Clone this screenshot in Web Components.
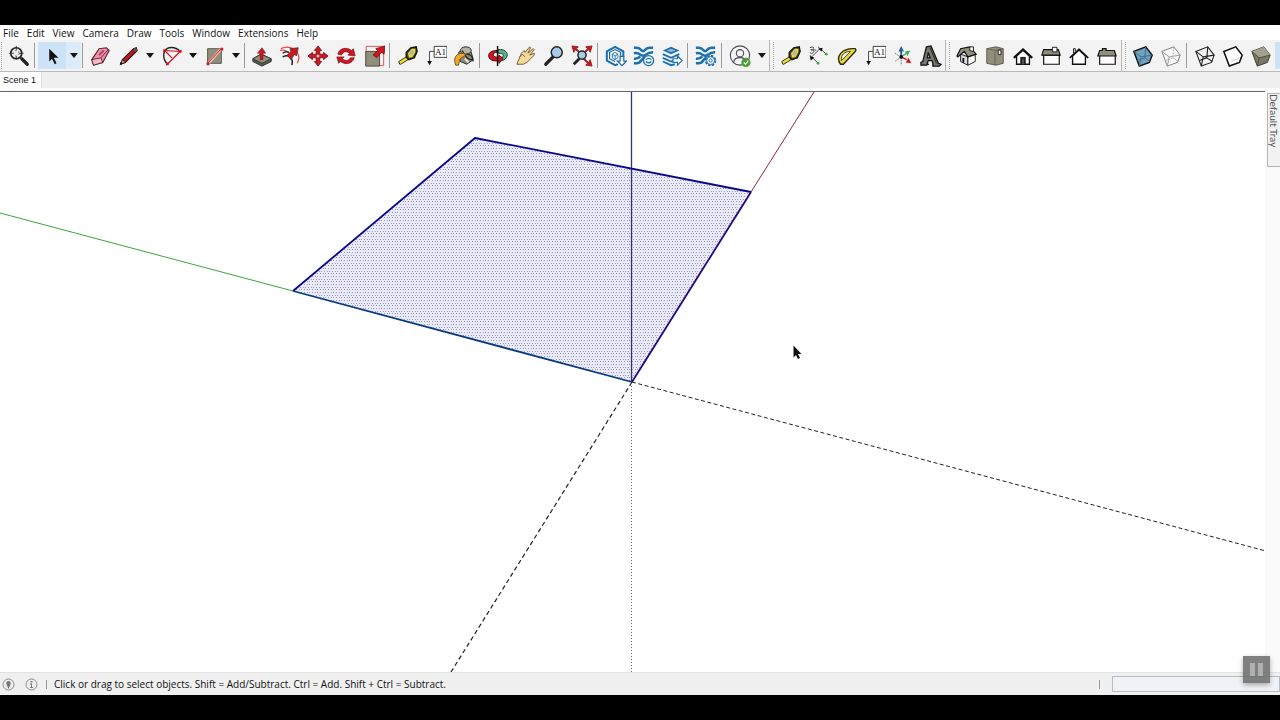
<!DOCTYPE html>
<html lang="en">
<head>
<meta charset="utf-8">
<title>Modeling window</title>
<style>
html, body { height: 100%; margin: 0; background: #000; }
body { font-family: "Open Sans", "Noto Sans", sans-serif; font-size: 10px; color: #1a1a1a; }
</style>
</head>
<body>
<model-app>
  <menu-bar slot="menu" items="File,Edit,View,Camera,Draw,Tools,Window,Extensions,Help"></menu-bar>
  <tool-bar slot="tools">
    <tool-grip></tool-grip>
    <tool-button icon="zoomwin" label="Zoom Window"></tool-button>
    <tool-sep tight></tool-sep>
    <tool-button icon="select" label="Select" menu active></tool-button>
    <tool-sep tight></tool-sep>
    <tool-button icon="eraser" label="Eraser"></tool-button>
    <tool-button icon="pencil" label="Line" menu></tool-button>
    <tool-button icon="arc" label="Arc" menu></tool-button>
    <tool-button icon="rect" label="Rectangle" menu></tool-button>
    <tool-sep tight></tool-sep>
    <tool-button icon="push" label="Push/Pull"></tool-button>
    <tool-button icon="offset" label="Offset"></tool-button>
    <tool-button icon="move" label="Move"></tool-button>
    <tool-button icon="rotate" label="Rotate"></tool-button>
    <tool-button icon="scale" label="Scale"></tool-button>
    <tool-sep></tool-sep>
    <tool-button icon="tape" label="Tape Measure"></tool-button>
    <tool-button icon="text" label="Text"></tool-button>
    <tool-button icon="paint" label="Paint Bucket"></tool-button>
    <tool-sep></tool-sep>
    <tool-button icon="orbit" label="Orbit"></tool-button>
    <tool-button icon="pan" label="Pan"></tool-button>
    <tool-button icon="zoom" label="Zoom"></tool-button>
    <tool-button icon="extents" label="Zoom Extents"></tool-button>
    <tool-sep></tool-sep>
    <tool-button icon="warehouse" label="3D Warehouse"></tool-button>
    <tool-button icon="share" label="Share Model"></tool-button>
    <tool-button icon="layers" label="Send to Layout"></tool-button>
    <tool-sep></tool-sep>
    <tool-button icon="extman" label="Extension Manager"></tool-button>
    <tool-sep></tool-sep>
    <tool-button icon="user" label="Account" menu></tool-button>
    <tool-grip edge></tool-grip>
    <tool-button icon="tape" label="Tape Measure"></tool-button>
    <tool-button icon="dim" label="Dimensions"></tool-button>
    <tool-button icon="protractor" label="Protractor"></tool-button>
    <tool-button icon="text" label="Text Label"></tool-button>
    <tool-button icon="axes" label="Axes"></tool-button>
    <tool-button icon="text3d" label="3D Text"></tool-button>
    <tool-grip edge></tool-grip>
    <tool-button icon="iso" label="Iso"></tool-button>
    <tool-button icon="top" label="Top"></tool-button>
    <tool-button icon="front" label="Front"></tool-button>
    <tool-button icon="right" label="Right"></tool-button>
    <tool-button icon="back" label="Back"></tool-button>
    <tool-button icon="left" label="Left"></tool-button>
    <tool-grip edge></tool-grip>
    <tool-button icon="xray" label="X-Ray"></tool-button>
    <tool-button icon="backedges" label="Back Edges"></tool-button>
    <tool-sep></tool-sep>
    <tool-button icon="wire" label="Wireframe"></tool-button>
    <tool-button icon="hidden" label="Hidden Line"></tool-button>
    <tool-button icon="shaded" label="Shaded"></tool-button>
    <tool-button icon="blank" label="Shaded With Textures" active></tool-button>
  </tool-bar>
  <scene-tabs slot="scenes">Scene 1</scene-tabs>
  <model-viewport slot="view"></model-viewport>
  <side-tray slot="tray">Default Tray</side-tray>
  <status-bar slot="status">Click or drag to select objects. Shift = Add/Subtract. Ctrl = Add. Shift + Ctrl = Subtract.</status-bar>
  <pause-button slot="overlay"></pause-button>
</model-app>

<script>
const define = (name, html, setup) => {
  const template = document.createElement('template');
  template.innerHTML = html;
  customElements.define(name, class extends HTMLElement {
    constructor() {
      super();
      this.attachShadow({ mode: 'open' }).append(template.content.cloneNode(true));
    }
    connectedCallback() { if (setup) setup(this, this.shadowRoot); }
  });
};

/* Shared drawing parts */
const RED = '#d3141f', STONE = '#918f7c', BLUE = '#1c6fae';
const ribbons = `<g fill="none" stroke="${BLUE}" stroke-width="2.800">
  <path d="M1 3h3q3 0 5 2.500t4 0t5-2.500h4M1 9q4-1 7 1.500t6 0t8-2.500M1 20h3q3 0 5-3t4-3M1 15q4 .5 7-2.500"/></g>`;
const tape = `<path d="M3 21l-1-3 8-5 2 3-8 5z" fill="#f4df21" stroke="#222"/><path d="M10 8l5-5 6-1 1 5-3 7-6 2-3-3z" fill="#4a4824" stroke="#111" stroke-width="1.400"/><path d="M12 9l4-5 4 0 0 4-3 5-4 1z" fill="#e5d936"/><ellipse cx="16" cy="8.500" rx="2.200" ry="3" fill="#b9b9a0" transform="rotate(30 16 8.500)"/>`;
const label = `<path d="M10 1.500h14v12H10zM10 7H5v12" fill="#fff" stroke="#333"/><path d="M2.500 17.500h5L5 22z" fill="#111"/><text x="17" y="11" text-anchor="middle" font-family="Liberation Serif, serif" font-size="10" fill="#111">A1</text>`;
const lens = (x, y, r) => `<circle cx="${x}" cy="${y}" r="${r}" fill="#a9cbe8" stroke="#222" stroke-width="1.600"/>`;

const ICONS = {
  blank: '',
  zoomwin: `<path d="M15 15l6 6" stroke="#222" stroke-width="3.500" stroke-linecap="round"/><circle cx="9" cy="9" r="6" fill="#eee" stroke="#222" stroke-width="1.800"/><path d="M9 1v5M9 12v4M1 9h5M12 9h5" stroke="#333"/><circle cx="9" cy="9" r="3" fill="none" stroke="#777" stroke-dasharray="2 2"/>`,
  select: `<path d="M9 4v14l3-3 3 6 2-1-3-6h5z" fill="#111"/>`,
  eraser: `<path d="M3 16L11 4l8-1 3 3-7 13-10 3z" fill="#ef8fa8" stroke="#5d2333" stroke-width="1.200"/><path d="M3 16l10-2 2 5-10 3z" fill="#fab9c9" stroke="#5d2333"/><path d="M13 14l8-9" stroke="#5d2333"/><path d="M11 11l5-5" stroke="#a8415c" stroke-width="2"/>`,
  pencil: `<path d="M4 21l2-5L18 4l3-1 1 3L9 19z" fill="#b01f24" stroke="#3a1010" stroke-width="1.300"/><path d="M4 21l2-5 3 3z" fill="#dcb884" stroke="#222"/><path d="M18 4l3-1 1 3-2 2z" fill="#555"/><path d="M4 21l1-2" stroke="#111" stroke-width="2"/>`,
  arc: `<path d="M8 21C2 14 3 5 10 3c5-1 9 1 12 4" fill="none" stroke="#222" stroke-width="1.500"/><path d="M5 6L22 7 8 21M5 6l8 8" fill="none" stroke="${RED}" stroke-width="1.300"/><path d="M3.500 4.500h3v3h-3zM20.500 5.500h3v3h-3zM6.500 19h3v3h-3z" fill="${RED}"/>`,
  rect: `<path d="M5 4h15v16H5z" fill="${STONE}" stroke="#555347"/><path d="M6 20L20 4" stroke="#f6b7b7" stroke-width="3"/><path d="M5 20L20 4" stroke="${RED}"/><path d="M4 19h3v3H4zM19 3h3v3h-3z" fill="${RED}"/>`,
  push: `<path d="M2 15l9-5 11 5v3l-10 5-10-5z" fill="#5c5b50" stroke="#222"/><path d="M2 15l9-5 11 5-10 5z" fill="${STONE}" stroke="#333"/><path d="M10 16V9H7l5-6 4 6h-3v7z" fill="${RED}" stroke="#721016" stroke-width=".6"/>`,
  offset: `<path d="M2 4C13-1 26 8 20 20M1 6c4-1 6 0 8 1" fill="none" stroke="#ee4049" stroke-width="1.300"/><path d="M4 13c7-4 12 2 10 9M4 9c3-2 5-2 7-1" fill="none" stroke="#222" stroke-width="1.600"/><path d="M9 11l4-4-1-3 9-1-2 9-2-2-4 6z" fill="${RED}" stroke="#333" stroke-width=".8"/>`,
  move: `<path d="M12 1l4 5h-2v4h4V8l5 4-5 4v-2h-4v4h2l-4 5-4-5h2v-4H6v2l-5-4 5-4v2h4V6H8z" fill="${RED}" stroke="#571014" stroke-width=".8"/><circle cx="12" cy="12" r="1.500" fill="#f5dede"/>`,
  rotate: `<path d="M3 10c2-7 10-8 15-4l2-2 2 8-8-1 2-2c-4-3-7-2-9 2zM21 14c-2 7-10 8-15 4l-2 2-2-7 8 0-2 2c4 3 7 2 9-1z" fill="${RED}" stroke="#6b1015" stroke-width=".7"/>`,
  scale: `<path d="M3.500 1.500h19v21h-19z" fill="none" stroke="#e34b50"/><path d="M3 7h15v16H3z" fill="${STONE}" stroke="#47463d"/><path d="M11 11l5-5-2-2 10-3-1 9-3-2-5 6z" fill="${RED}" stroke="#5a0e12" stroke-width=".8"/>`,
  tape,
  text: label,
  paint: `<path d="M6 8l8-5 6 5 2 8-7 5-7-3z" fill="#8b8c7b" stroke="#222"/><ellipse cx="14" cy="6" rx="6" ry="4" fill="#b3b4a3" stroke="#222"/><path d="M15 10c5 0 7 4 7 8M10 6c4 6 5 10 11 10" fill="none" stroke="#222" stroke-width="1.400"/><path d="M3 22C0 14 3 9 11 9c3 0 3 3 0 4-4 1-4 5-5 9z" fill="#f2a72c" stroke="#69501d"/><path d="M13 15l4 4" stroke="#e8e8dc" stroke-width="2"/>`,
  orbit: `<path d="M11 6C4 6 1 9 2 13c1 4 7 5 11 4v3l5-5-5-4v2c-4 1-7-1-6-3s2-2 4-2z" fill="${RED}" stroke="#38090c"/><path d="M12 5c7-1 11 3 10 7-1 3-3 4-5 5v-4c2-2 1-4-5-4z" fill="#59b08a" stroke="#173c2b"/><path d="M11.500 1v22" stroke="#111" stroke-width="1.600"/>`,
  pan: `<path d="M2 21L7 9l3-3 1 2 5-6 1 1-3 6 6-5 1 1-5 6 5-2v2l-8 8-4 2z" fill="#f3d99e" stroke="#70552b"/><path d="M5 13l3-3 3 3" fill="none" stroke="#70552b"/>`,
  zoom: `<path d="M3 21l8-8" stroke="#222" stroke-width="3.500" stroke-linecap="round"/>${lens(15, 8, 6)}`,
  extents: `<path d="M1 1l7 1-2 2 5 5-1 1-5-5-2 3zM23 1l-7 1 2 2-5 5 1 1 5-5 2 3zM23 23l-7-1 2-2-5-5 1-1 5 5 2-3z" fill="${RED}" stroke="#791016" stroke-width=".8"/><path d="M3 21l6-6" stroke="#222" stroke-width="3"/>${lens(12, 11, 4.5)}`,
  warehouse: `<path d="M14 21l-3 1-9-5V7l9-5 9 5v6" fill="none" stroke="${BLUE}" stroke-width="2.200"/><path d="M11 18l-6-3V8l6-3 6 3v6" fill="none" stroke="${BLUE}" stroke-width="1.300"/><path d="M11 8l3 2v4l-3 2-3-2v-4zM8 10l3 2 3-2M11 12v4" fill="#fff" stroke="${BLUE}"/><path d="M16.500 12.500h4v5h3l-5 5-5-5h3z" fill="#fff" stroke="${BLUE}" stroke-width="1.300"/>`,
  share: `${ribbons}<circle cx="17" cy="17" r="5.500" fill="#f3f8fb" stroke="${BLUE}" stroke-width="1.400"/><path d="M14 16q3-3 6 0M14 18q3 3 6 0" fill="none" stroke="${BLUE}" stroke-width="1.300"/>`,
  layers: `<path d="M2 6l9-4 9 4-9 4z" fill="${BLUE}"/><path d="M6 6l5-2 5 2-5 2z" fill="#8fb9d6"/><path d="M2 10l9 4 9-4M2 14l9 4 4-1M2 18l9 4 4-1" fill="none" stroke="${BLUE}" stroke-width="2"/><path d="M13 15h5v-3l5 5-5 5v-3h-5z" fill="#fff" stroke="${BLUE}" stroke-width="1.300"/>`,
  extman: `${ribbons}<circle cx="17" cy="17" r="5" fill="#f3f8fb" stroke="${BLUE}" stroke-width="2.500" stroke-dasharray="2.500 1.400"/><circle cx="17" cy="17" r="4.300" fill="#f3f8fb" stroke="${BLUE}"/><circle cx="17" cy="17" r="1.800" fill="none" stroke="${BLUE}"/>`,
  user: `<circle cx="12" cy="11.500" r="10.500" fill="#f5f5f7" stroke="#4b4b55" stroke-width="1.200"/><circle cx="12" cy="9" r="4" fill="none" stroke="#4b4b55" stroke-width="1.200"/><path d="M5 19c1-7 13-7 14 0" fill="none" stroke="#4b4b55" stroke-width="1.200"/><circle cx="18.500" cy="19" r="5" fill="#4a9c35"/><path d="M16 19l2 2 3-4" fill="none" stroke="#fff" stroke-width="1.300"/>`,
  dim: `<path d="M4 13L13 4M2 11l9 9M11 2l9 8" fill="none" stroke="#444"/><path d="M2 12l5 2-4 3zM11 4l5-1-1 4z" fill="#111"/><path d="M2 3q5-2 4 1t-3 1q5 0 3 3T2 8M7 5l2 1" fill="none" stroke="#333"/><circle cx="11" cy="20" r="1.500" fill="#42a742"/><circle cx="20" cy="10" r="1.500" fill="#42a742"/>`,
  protractor: `<path d="M5 21C-1 13 6 3 21 4c1 1 1 2 0 3L8 21z" fill="#e8dd36" stroke="#29270f" stroke-width="1.500"/><path d="M6 17C5 11 9 7 16 7z" fill="#f3f3ee" stroke="#333"/>`,
  axes: `<path d="M10 13v9M10 13L3 9M10 13l-7 5" stroke="#777" stroke-dasharray="2 1"/><path d="M10 14V5" stroke="#225e9c" stroke-width="2"/><path d="M10 1l3 6H7z" fill="#225e9c"/><path d="M10 13l6-4" stroke="#44ac54" stroke-width="1.500"/><path d="M20 6l-3 6-3-5z" fill="#44ac54"/><path d="M10 13l6 3" stroke="${RED}" stroke-width="1.500"/><path d="M21 20l-6-1 3-5z" fill="${RED}"/><circle cx="10" cy="13" r="2" fill="#111"/>`,
  text3d: `<path fill-rule="evenodd" d="M7 2l5-1 8 19 3 1-2 2h-7v-3l-1-3H9l-1 3 1 1-2 1H1v-3l2-1zM9 8l-1 6h3z" fill="#77776c" stroke="#111" stroke-width="1.400"/><path d="M11 3l7 17" fill="none" stroke="#222"/>`,
  iso: `<path d="M5 10l8 3v9l-8-4z" fill="#ddd" stroke="#111"/><path d="M13 13l8-3v8l-8 4z" fill="#fff" stroke="#111"/><path d="M1 12l4-8 10-2 7 8-9 3-4-6-7 6z" fill="${STONE}" stroke="#111" stroke-width="1.300"/><path d="M15 2h4v5l-4-1z" fill="#fff" stroke="#111"/><path d="M8 14v5" stroke="#111" stroke-width="2"/>`,
  top: `<path d="M3 4l10-2 8 2v16l-8 2-10-2z" fill="${STONE}" stroke="#595748"/><path d="M12 6v16M3 4l9 2 9-2" fill="none" stroke="#66644f"/><path d="M15.500 5.500h3v5h-3z" fill="#eee" stroke="#222"/>`,
  front: `<path d="M5 12v9h14v-9l-7-7z" fill="#fff" stroke="#111" stroke-width="1.500"/><path d="M2 14L12 5l10 9" fill="none" stroke="#111" stroke-width="2.400"/><path d="M9 13h6v8H9z" fill="#222"/><path d="M12 15v6" stroke="#888"/>`,
  right: `<path d="M4 11h17v10H4z" fill="#fff" stroke="#111" stroke-width="1.300"/><path d="M4 5h16l2 6H2z" fill="${STONE}" stroke="#111" stroke-width="1.300"/><path d="M13.500 2.500h5v5h-5z" fill="#fff" stroke="#111"/>`,
  back: `<path d="M5 12v9h14v-9l-7-7z" fill="#fff" stroke="#111" stroke-width="1.500"/><path d="M2 14L12 5l10 9" fill="none" stroke="#111" stroke-width="2"/><path d="M6 9V4h2v3" fill="none" stroke="#111"/>`,
  left: `<path d="M4 11h17v10H4z" fill="#fff" stroke="#111" stroke-width="1.300"/><path d="M4 6h3V4h4v2h9l2 6H2z" fill="${STONE}" stroke="#111" stroke-width="1.300"/>`,
  xray: `<path d="M2 7l13-5 7 9-3 8-11 4z" fill="#6fa0bd" stroke="#111" stroke-width="1.600"/><path d="M2 7l8 6-2 10M10 13l12-2M15 2l-1 12-8 3M14 14l6 4" fill="none" stroke="#3d6d8a"/>`,
  backedges: `<path d="M2 7l13-5 7 9-3 8-11 4z" fill="#f7f7f7" stroke="#777"/><path d="M2 7l8 6-2 10M10 13l12-2" fill="none" stroke="#999"/><path d="M15 2l-1 12-8 3M14 14l6 4" fill="none" stroke="#aaa" stroke-dasharray="2 1"/>`,
  wire: `<g fill="none" stroke="#222" stroke-width="1.200"><path d="M2 7l13-5 7 9-3 8-11 4z"/><path d="M2 7l8 6-2 10M10 13l12-2M15 2l-1 12-8 3M14 14l6 4"/></g>`,
  hidden: `<path d="M2 7l13-5 7 9-3 8-11 4z" fill="#fff" stroke="#111" stroke-width="1.700"/><path d="M10 18l9-4" fill="none" stroke="#ccc"/>`,
  shaded: `<path d="M2 7l13-5 7 9-3 8-11 4z" fill="#7b7966" stroke="#333226"/><path d="M2 7l13-5 7 9-12 3z" fill="#a3a18d"/><path d="M2 7l8 7-2 9M10 14l12-3" fill="none" stroke="#4b4a3c"/>`
};

define('model-app', `
<style>
:host { display: flex; flex-direction: column; height: 100vh; box-sizing: border-box; padding: 25px 0; overflow: hidden; position: relative; background: #000; }
main { flex: 1; min-height: 0; display: grid; grid-template-columns: minmax(0, 1fr) 15px; background: #fafafa; }
</style>
<slot name="menu"></slot><slot name="tools"></slot><slot name="scenes"></slot>
<main><slot name="view"></slot><slot name="tray"></slot></main>
<slot name="status"></slot><slot name="overlay"></slot>`);

define('menu-bar', `
<style>
:host { display: block; background: #fff; }
nav { display: flex; gap: 8px; padding: 1px 3px 0; height: 14px; }
button { border: 0; padding: 0; background: none; font: inherit; line-height: 14px; color: #111; white-space: nowrap; }
</style><nav aria-label="Main menu"></nav>`, (host, root) => {
  const nav = root.querySelector('nav');
  nav.replaceChildren(...host.getAttribute('items').split(',').map(name => {
    const b = document.createElement('button');
    b.textContent = name;
    return b;
  }));
});

define('tool-bar', `
<style>
:host { display: block; background: #f3f3f3; border-bottom: 1px solid #b9b9b9; overflow: hidden; }
div { display: flex; height: 31px; align-items: stretch; }
</style><div role="toolbar" aria-label="Tools"><slot></slot></div>`);

define('tool-sep', `
<style>
:host { display: block; flex: none; width: 6px; }
:host([tight]) { width: 5px; }
i { display: block; width: 1px; height: 25px; margin: 3px 1px; background: #9a9a9a; }
</style><i></i>`);

define('tool-grip', `
<style>
:host { display: block; flex: none; width: 5px; }
i { display: block; height: 27px; margin: 2px 1px; border-left: 1px dotted #aaa; }
:host([edge]) { width: 8px; box-sizing: border-box; border-left: 1px solid #b5b5b5; }
:host([edge]) i { margin: 2px 3px; }
</style><i></i>`);

define('tool-button', `
<style>
:host { display: flex; flex: none; }
button { border: 0; padding: 0; margin: 2px 0; background: none; display: grid; place-items: center; }
.main { width: 28px; }
.more { width: 15px; }
:host([active]) button { background: #cce2f6; }
:host([active]) .more { background: #dcebf9; }
svg { display: block; }
</style>
<button class="main"><svg width="22" height="22" viewBox="0 0 24 24"></svg></button>
<button class="more"><svg width="8" height="5" viewBox="0 0 8 5"><path d="M0 0h8L4 5z" fill="#111"/></svg></button>`, (host, root) => {
  const name = host.getAttribute('label');
  root.querySelector('.main').setAttribute('aria-label', name);
  root.querySelector('.main svg').innerHTML = ICONS[host.getAttribute('icon')];
  const more = root.querySelector('.more');
  if (host.hasAttribute('menu')) more.setAttribute('aria-label', name + ' options');
  else more.remove();
});

define('scene-tabs', `
<style>
:host { display: flex; flex: none; height: 16px; background: #f0f0f0; border-bottom: 3px solid #fafafa; }
button { border: 0; border-right: 1px solid #ddd; padding: 0 5px 0 3px; background: #fff; font: 9px/15px "Liberation Sans", sans-serif; color: #111; }
</style><button role="tab" aria-selected="true"><slot></slot></button>`);

define('model-viewport', `
<style>
:host { display: block; min-height: 0; min-width: 0; background: #fff; border-top: 1px solid #666; overflow: hidden; }
svg { display: block; width: 100%; height: 100%; }
</style>
<svg viewBox="0 0 1265 580" preserveAspectRatio="xMidYMid slice" role="img" aria-label="Selected face on the model axes">
  <defs><pattern id="dots" width="8" height="8" patternUnits="userSpaceOnUse">
    <rect width="8" height="8" fill="#eaeaf6"/>
    <path d="M0 0h1v1H0zM3 0h1v1H3zM5 0h1v1H5zM1 3h1v1H1zM4 3h1v1H4zM7 3h1v1H7zM0 5h1v1H0zM3 5h1v1H3zM5 5h1v1H5z" fill="#9a9ad6"/>
  </pattern></defs>
  <path d="M475 46L751 100 632 290 293 199z" fill="url(#dots)"/>
  <path d="M0 121L293 199" stroke="#3fa53f" fill="none"/>
  <path d="M751 100L814 0" stroke="#8c2a2a" fill="none"/>
  <path d="M631.500 0V290" stroke="#333372" stroke-width="1.300"/>
  <path d="M293 199L475 46 751 100" fill="none" stroke="#08088a" stroke-width="1.800" stroke-linejoin="round"/>
  <path d="M751 100L632 290" stroke="#24067c" stroke-width="1.800"/>
  <path d="M293 199L632 290" stroke="#073a7c" stroke-width="1.800"/>
  <path d="M632 290L1264 458.500" stroke="#222" stroke-dasharray="4 2.500"/>
  <path d="M632 290L451 580" stroke="#222" stroke-width="1.200" stroke-dasharray="4.500 3"/>
  <path d="M631.500 291V580" stroke="#666" stroke-dasharray="1 2"/>
  <path d="M793.500 253.500v12l2.500-2.500 2 4 2-1-2-4h3.500z" fill="#111"/>
</svg>`);

define('side-tray', `
<style>
:host { display: block; padding: 2px 0 0 2px; background: #fafafa; }
button { display: block; box-sizing: border-box; width: 13px; height: 74px; padding: 0; margin: 0; border: 1px solid #b5b5b5; border-right: 0; background: #f2f2f2; color: #555; font: 10px/12px Lato, "Open Sans", sans-serif; writing-mode: vertical-rl; text-align: start; white-space: nowrap; }
</style><button><slot></slot></button>`);

define('status-bar', `
<style>
:host { display: flex; flex: none; align-items: center; height: 23px; box-sizing: border-box; border-top: 1px solid #e2e2e2; background: #f0f0f0; padding-left: 2px; gap: 7px; }
.icons { display: flex; gap: 10px; }
button { border: 0; padding: 0; background: none; display: block; }
svg { display: block; }
i { width: 1px; height: 9px; background: #999; flex: none; margin-left: 1px; }
output { flex: 1; min-width: 0; white-space: nowrap; overflow: hidden; color: #111; line-height: 20px; }
input { width: 168px; height: 16px; box-sizing: border-box; margin-left: 5px; padding: 0 3px; border: 1px solid #b4bcc6; border-radius: 0; background: #f0f2f6; font: inherit; }
</style>
<div class="icons">
<button aria-label="Geo-location"><svg width="13" height="13" viewBox="0 0 13 13"><circle cx="6.500" cy="6.500" r="5.500" fill="#eee" stroke="#8c8c8c"/><path d="M6.500 11L4.500 6.500a2.300 2.300 0 1 1 4 0z" fill="#777"/></svg></button>
<button aria-label="Model credits"><svg width="13" height="13" viewBox="0 0 13 13"><circle cx="6.500" cy="6.500" r="5.500" fill="#eee" stroke="#8c8c8c"/><path d="M5 5.500h2V9h1v1H5V9h1V6.500H5zM5.500 3h2v1.500h-2z" fill="#777"/></svg></button>
</div><i></i><output><slot></slot></output><i></i><input type="text" aria-label="Measurements">`);

define('pause-button', `
<style>
:host { display: block; position: absolute; right: 10px; bottom: 37px; }
button { width: 27px; height: 27px; border: 0; padding: 0; display: grid; place-items: center; background: rgba(100, 100, 100, .82); box-shadow: 0 2px 5px rgba(0, 0, 0, .3); }
</style>
<button aria-label="Pause"><svg width="13" height="13" viewBox="0 0 13 13"><path d="M0 0h5v13H0zM8 0h5v13H8z" fill="#b0b0b0"/></svg></button>`);
</script>
</body>
</html>
